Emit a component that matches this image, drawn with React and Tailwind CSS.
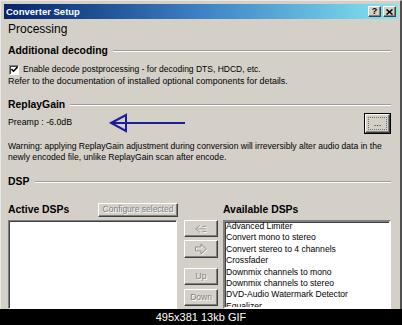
export default function App() {
  const raised =
    "border border-t-white border-l-white border-b-[#404040] border-r-[#404040] shadow-[inset_-1px_-1px_0_#808080] bg-[#d4d0c8]";
  const disabledText = "text-[#808080] [text-shadow:1px_1px_0_#ffffff]";
  const items = [
    "Advanced Limiter",
    "Convert mono to stereo",
    "Convert stereo to 4 channels",
    "Crossfader",
    "Downmix channels to mono",
    "Downmix channels to stereo",
    "DVD-Audio Watermark Detector",
    "Equalizer",
  ];
  const Etched = ({ className = "" }) => (
    <div className={"flex-1 flex flex-col " + className}>
      <div className="h-px bg-[#9c9c9c]" />
      <div className="h-px bg-white" />
    </div>
  );
  return (
    <div className="w-[402px] h-[325px] bg-black flex flex-col overflow-hidden font-['Liberation_Sans',Arial,sans-serif] text-black">
      <div className="h-[309px] shrink-0 bg-[#d4d0c8] border-l border-t border-l-[#e8e8e8] border-t-[#e8e8e8] border-r-2 border-r-[#505050] flex flex-col overflow-hidden">
        {/* title bar */}
        <div className="ml-[3px] mr-[2px] mt-[3px] h-[15px] shrink-0 bg-linear-to-r from-[#0a246a] via-[#3d82c4] to-[#86e6f0] flex items-center pl-[2px] pr-[2px]">
          <span className="text-white font-bold text-[9.5px] leading-none">Converter Setup</span>
          <div className="ml-auto flex gap-[2px]">
            <div className={raised + " w-[13px] h-[11px] flex items-center justify-center text-[9px] font-bold leading-none"}>?</div>
            <div className={raised + " w-[13px] h-[11px] flex items-center justify-center"}>
              <svg width="7" height="6" viewBox="0 0 7 6">
                <path d="M0.5 0.5 L6.5 5.5 M6.5 0.5 L0.5 5.5" stroke="#000" strokeWidth="1.5" />
              </svg>
            </div>
          </div>
        </div>

        <div className="flex-1 flex flex-col pl-[7px] pr-[9px] min-h-0">
          <div className="h-[20px] shrink-0 flex items-center text-[12px]">Processing</div>

          <div className="h-[24px] shrink-0 flex items-center">
            <span className="font-bold text-[10.4px]">Additional decoding</span>
            <Etched className="ml-[5px]" />
          </div>

          <div className="h-[13px] shrink-0 flex items-center text-[8.5px]">
            <div className="ml-[1px] w-[10px] h-[10px] bg-white border border-t-[#808080] border-l-[#808080] border-b-white border-r-white shadow-[inset_1px_1px_0_#404040] flex items-center justify-center">
              <svg width="7" height="7" viewBox="0 0 7 7">
                <path d="M0.5 3 L2.5 5.2 L6.5 1" stroke="#000" strokeWidth="1.6" fill="none" />
              </svg>
            </div>
            <span className="ml-[4px]">Enable decode postprocessing - for decoding DTS, HDCD, etc.</span>
          </div>

          <div className="h-[12px] shrink-0 flex items-center text-[8.9px]">
            Refer to the documentation of installed optional components for details.
          </div>

          <div className="h-[10px] shrink-0" />

          <div className="h-[14px] shrink-0 flex items-center">
            <span className="font-bold text-[10.4px]">ReplayGain</span>
            <Etched className="ml-[5px]" />
          </div>

          <div className="h-[22px] shrink-0 flex items-center">
            <span className="text-[8.8px]">Preamp : -6.0dB</span>
            <svg className="ml-[37px]" width="78" height="20" viewBox="0 0 78 20">
              <path d="M2 10 L76 10" stroke="#1c1ca0" strokeWidth="2" />
              <path d="M2 10 L17 2 L17 18 Z" stroke="#1c1ca0" strokeWidth="2" fill="none" strokeLinejoin="miter" />
            </svg>
            <div className="ml-auto w-[27px] h-[21px] border border-black flex">
              <div className={raised + " flex-1 flex p-[2px]"}>
                <div className="flex-1 border border-dotted border-[#707070] flex items-end justify-center pb-[1px] text-[9px] leading-none">...</div>
              </div>
            </div>
          </div>

          <div className="h-[7px] shrink-0" />

          <div className="shrink-0 text-[8.6px] leading-[11px]">
            <div>Warning: applying ReplayGain adjustment during conversion will irreversibly alter audio data in the</div>
            <div>newly encoded file, unlike ReplayGain scan after encode.</div>
          </div>

          <div className="h-[11px] shrink-0" />

          <div className="h-[16px] shrink-0 flex items-center">
            <span className="font-bold text-[10.4px]">DSP</span>
            <Etched className="ml-[6px]" />
          </div>

          <div className="h-[12px] shrink-0" />

          <div className="h-[15px] shrink-0 flex items-center">
            <div className="w-[170px] flex items-center">
              <span className="font-bold text-[10.4px]">Active DSPs</span>
              <div className={raised + " ml-auto w-[80px] h-[14px] flex items-center justify-center text-[8.5px] " + disabledText}>
                Configure selected
              </div>
            </div>
            <div className="ml-[45px] font-bold text-[10.4px]">Available DSPs</div>
          </div>

          <div className="h-[3px] shrink-0" />

          <div className="flex-1 flex min-h-0 overflow-hidden">
            <div className="w-[169px] bg-white border border-t-[#808080] border-l-[#808080] border-b-white border-r-white shadow-[inset_1px_1px_0_#404040]" />
            <div className="ml-[7px] w-[34px] flex flex-col">
              <div className={raised + " h-[17px] shrink-0 flex items-center justify-center"}>
                <svg width="14" height="10" viewBox="0 0 14 10">
                  <path d="M6 1.5 L1.5 5 L6 8.5 M2 5 L12.5 5 M8.5 2.5 L12.5 2.5 M8.5 7.5 L12.5 7.5" stroke="#ffffff" strokeWidth="1" fill="none" transform="translate(0.7 0.7)" />
                  <path d="M6 1.5 L1.5 5 L6 8.5 M2 5 L12.5 5 M8.5 2.5 L12.5 2.5 M8.5 7.5 L12.5 7.5" stroke="#9a9a9a" strokeWidth="1" fill="none" />
                </svg>
              </div>
              <div className={raised + " mt-[3px] h-[18px] shrink-0 flex items-center justify-center"}>
                <svg width="14" height="12" viewBox="0 0 14 12">
                  <path d="M1.5 4 L7 4 L7 1 L12.5 6 L7 11 L7 8 L1.5 8 Z" stroke="#ffffff" strokeWidth="1" fill="none" transform="translate(0.7 0.7)" />
                  <path d="M1.5 4 L7 4 L7 1 L12.5 6 L7 11 L7 8 L1.5 8 Z" stroke="#8a8a8a" strokeWidth="1" fill="none" />
                </svg>
              </div>
              <div className={raised + " mt-[10px] h-[17px] shrink-0 flex items-center justify-center text-[8.5px] " + disabledText}>Up</div>
              <div className={raised + " mt-[4px] h-[17px] shrink-0 flex items-center justify-center text-[8.5px] " + disabledText}>Down</div>
            </div>
            <div className="ml-[5px] w-[168px] bg-white border-2 border-t-[#808080] border-l-[#808080] border-b-white border-r-white shadow-[inset_1px_1px_0_#404040] overflow-hidden">
              <div className="pl-[1px] text-[8.6px] leading-[11.4px] -mt-[1px]">
                {items.map((t) => (
                  <div key={t} className="whitespace-nowrap">{t}</div>
                ))}
              </div>
            </div>
          </div>
        </div>
      </div>
      <div className="flex-1 flex items-center justify-center text-white text-[11px]">495x381 13kb GIF</div>
    </div>
  );
}
